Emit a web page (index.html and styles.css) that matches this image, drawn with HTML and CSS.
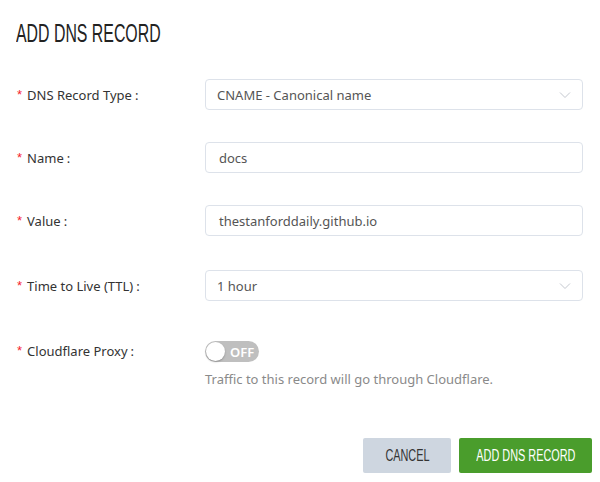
FILE: index.html
```html
<!DOCTYPE html>
<html>
<head>
<meta charset="utf-8">
<link rel="stylesheet" href="styles.css">
</head>
<body>
<div class="modal">
  <div class="header"><h1 class="title">ADD DNS RECORD</h1></div>
  <form class="form">
    <div class="row">
      <label class="label"><span class="req">*</span>DNS Record Type<span class="colon">:</span></label>
      <div class="control">
        <div class="field select"><span>CNAME - Canonical name</span>
          <svg class="chev" width="12" height="8" viewBox="0 0 12 8"><path d="M1 1.5 L6 6.5 L11 1.5" fill="none" stroke="#c4c8cf" stroke-width="1"/></svg>
        </div>
      </div>
    </div>
    <div class="row">
      <label class="label"><span class="req">*</span>Name<span class="colon">:</span></label>
      <div class="control"><div class="field input">docs</div></div>
    </div>
    <div class="row">
      <label class="label"><span class="req">*</span>Value<span class="colon">:</span></label>
      <div class="control"><div class="field input">thestanforddaily.github.io</div></div>
    </div>
    <div class="row row-ttl">
      <label class="label"><span class="req">*</span>Time to Live (TTL)<span class="colon">:</span></label>
      <div class="control">
        <div class="field select"><span>1 hour</span>
          <svg class="chev" width="12" height="8" viewBox="0 0 12 8"><path d="M1 1.5 L6 6.5 L11 1.5" fill="none" stroke="#c4c8cf" stroke-width="1"/></svg>
        </div>
      </div>
    </div>
    <div class="row row-proxy">
      <label class="label"><span class="req">*</span>Cloudflare Proxy<span class="colon">:</span></label>
      <div class="control">
        <div class="switch"><span class="knob"></span><span class="switch-text">OFF</span></div>
        <p class="help">Traffic to this record will go through Cloudflare.</p>
      </div>
    </div>
  </form>
  <div class="footer">
    <button class="btn btn-cancel" type="button"><span class="btn-text">CANCEL</span></button>
    <button class="btn btn-primary" type="button"><span class="btn-text">ADD DNS RECORD</span></button>
  </div>
</div>
</body>
</html>
```

FILE: styles.css
```css
* { box-sizing: border-box; }
html, body { margin: 0; padding: 0; background: #fff; }
body {
  width: 600px;
  height: 482px;
  font-family: "Noto Sans", "Open Sans", sans-serif;
  font-size: 13px;
  color: #333;
  overflow: hidden;
}
.modal {
  display: flex;
  flex-direction: column;
  height: 482px;
}
.header {
  height: 79px;
  padding: 18px 0 0 16px;
}
.title {
  margin: 0;
  display: inline-block;
  font-family: "Liberation Sans", sans-serif;
  font-weight: 400;
  font-size: 25px;
  line-height: 30px;
  color: #222;
  white-space: nowrap;
  transform: scaleX(0.635);
  transform-origin: left center;
}
.form {
  display: flex;
  flex-direction: column;
  gap: 32px;
}
.row {
  display: flex;
  align-items: flex-start;
}
.row-ttl { margin-top: 2px; }
.row-proxy { margin-top: 2px; }
.label {
  width: 205px;
  padding-left: 17px;
  height: 31px;
  display: flex;
  align-items: center;
  color: #333;
  font-size: 13px;
}
.req {
  color: #f5222d;
  margin-right: 5px;
  font-size: 13px;
  font-family: "Liberation Sans", sans-serif;
}
.colon { margin-left: 3px; }
.control {
  width: 378px;
}
.field {
  height: 31px;
  border: 1px solid #dde2ea;
  border-radius: 4px;
  display: flex;
  align-items: center;
  color: #555;
  font-size: 13px;
}
.select { padding: 0 11px 0 11px; justify-content: space-between; }
.input { padding: 0 13px; }
.chev { margin-top: 1px; }
.switch {
  margin-top: 6px;
  width: 54px;
  height: 21px;
  border-radius: 11px;
  background: #bfbfbf;
  position: relative;
  display: flex;
  align-items: center;
}
.knob {
  position: absolute;
  left: 1px;
  top: 1px;
  width: 19px;
  height: 19px;
  border-radius: 50%;
  background: #fff;
  box-shadow: 0 1px 2px rgba(0,0,0,0.25);
}
.switch-text {
  margin-left: 25px;
  color: #fff;
  font-size: 13px;
  font-weight: 600;
}
.help {
  margin: 8px 0 0 0;
  color: #8a8a8a;
  font-size: 13px;
  line-height: 18px;
}
.footer {
  margin-top: auto;
  display: flex;
  justify-content: flex-end;
  gap: 8px;
  padding: 0 8px 9px 0;
}
.btn {
  height: 35px;
  border: none;
  border-radius: 2px;
  font-family: "Liberation Sans", sans-serif;
  font-size: 16px;
  padding: 0;
  display: flex;
  align-items: center;
  justify-content: center;
  white-space: nowrap;
  overflow: hidden;
  cursor: pointer;
}
.btn-text {
  display: inline-block;
  transform: scaleX(0.68);
}
.btn-cancel {
  width: 88px;
  background: #ced6e0;
  color: #333;
}
.btn-primary {
  width: 133px;
  background: #4a9d2c;
  color: #fff;
}
```
